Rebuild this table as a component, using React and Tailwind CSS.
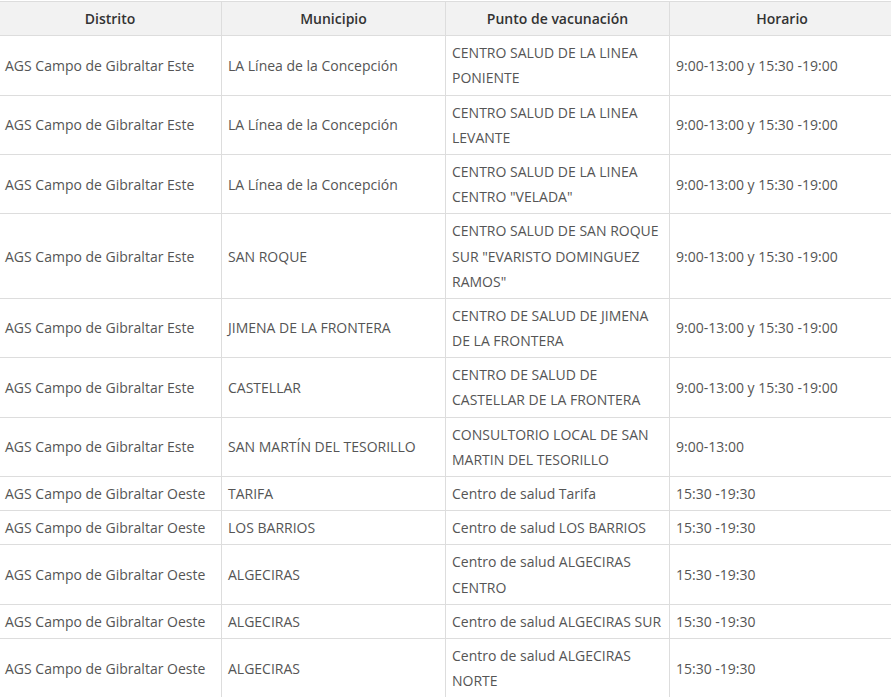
import React from 'react';

const rows = [
    ['AGS Campo de Gibraltar Este', 'LA Línea de la Concepción', 'CENTRO SALUD DE LA LINEA PONIENTE', '9:00-13:00 y 15:30 -19:00'],
    ['AGS Campo de Gibraltar Este', 'LA Línea de la Concepción', 'CENTRO SALUD DE LA LINEA LEVANTE', '9:00-13:00 y 15:30 -19:00'],
    ['AGS Campo de Gibraltar Este', 'LA Línea de la Concepción', 'CENTRO SALUD DE LA LINEA CENTRO "VELADA"', '9:00-13:00 y 15:30 -19:00'],
    ['AGS Campo de Gibraltar Este', 'SAN ROQUE', 'CENTRO SALUD DE SAN ROQUE SUR "EVARISTO DOMINGUEZ RAMOS"', '9:00-13:00 y 15:30 -19:00'],
    ['AGS Campo de Gibraltar Este', 'JIMENA DE LA FRONTERA', 'CENTRO DE SALUD DE JIMENA DE LA FRONTERA', '9:00-13:00 y 15:30 -19:00'],
    ['AGS Campo de Gibraltar Este', 'CASTELLAR', 'CENTRO DE SALUD DE CASTELLAR DE LA FRONTERA', '9:00-13:00 y 15:30 -19:00'],
    ['AGS Campo de Gibraltar Este', 'SAN MARTÍN DEL TESORILLO', 'CONSULTORIO LOCAL DE SAN MARTIN DEL TESORILLO', '9:00-13:00'],
    ['AGS Campo de Gibraltar Oeste', 'TARIFA', 'Centro de salud Tarifa', '15:30 -19:30'],
    ['AGS Campo de Gibraltar Oeste', 'LOS BARRIOS', 'Centro de salud LOS BARRIOS', '15:30 -19:30'],
    ['AGS Campo de Gibraltar Oeste', 'ALGECIRAS', 'Centro de salud ALGECIRAS CENTRO', '15:30 -19:30'],
    ['AGS Campo de Gibraltar Oeste', 'ALGECIRAS', 'Centro de salud ALGECIRAS SUR', '15:30 -19:30'],
    ['AGS Campo de Gibraltar Oeste', 'ALGECIRAS', 'Centro de salud ALGECIRAS NORTE', '15:30 -19:30'],
];

const headers = ['Distrito', 'Municipio', 'Punto de vacunación', 'Horario'];

export default function App() {
    return (
        <div className="min-h-screen bg-white overflow-hidden pt-[1px] font-['Open_Sans',sans-serif] text-[14px] leading-[1.8]">
            <table className="table-fixed border-collapse w-[896px] ml-[-2px]">
                <colgroup>
                    <col className="w-[223px]" />
                    <col className="w-[224px]" />
                    <col className="w-[224px]" />
                    <col className="w-[225px]" />
                </colgroup>
                <thead>
                    <tr className="bg-[#f2f2f2]">
                        {headers.map(h => (
                            <th key={h} className="border border-[#dddddd] px-[6px] py-1 text-center font-semibold text-[#333333]">
                                {h}
                            </th>
                        ))}
                    </tr>
                </thead>
                <tbody>
                    {rows.map((r, i) => (
                        <tr key={i}>
                            {r.map((c, j) => (
                                <td key={j} className="border border-[#dddddd] px-[6px] py-1 align-middle text-left text-[#555555]">
                                    {c}
                                </td>
                            ))}
                        </tr>
                    ))}
                </tbody>
            </table>
        </div>
    );
}
